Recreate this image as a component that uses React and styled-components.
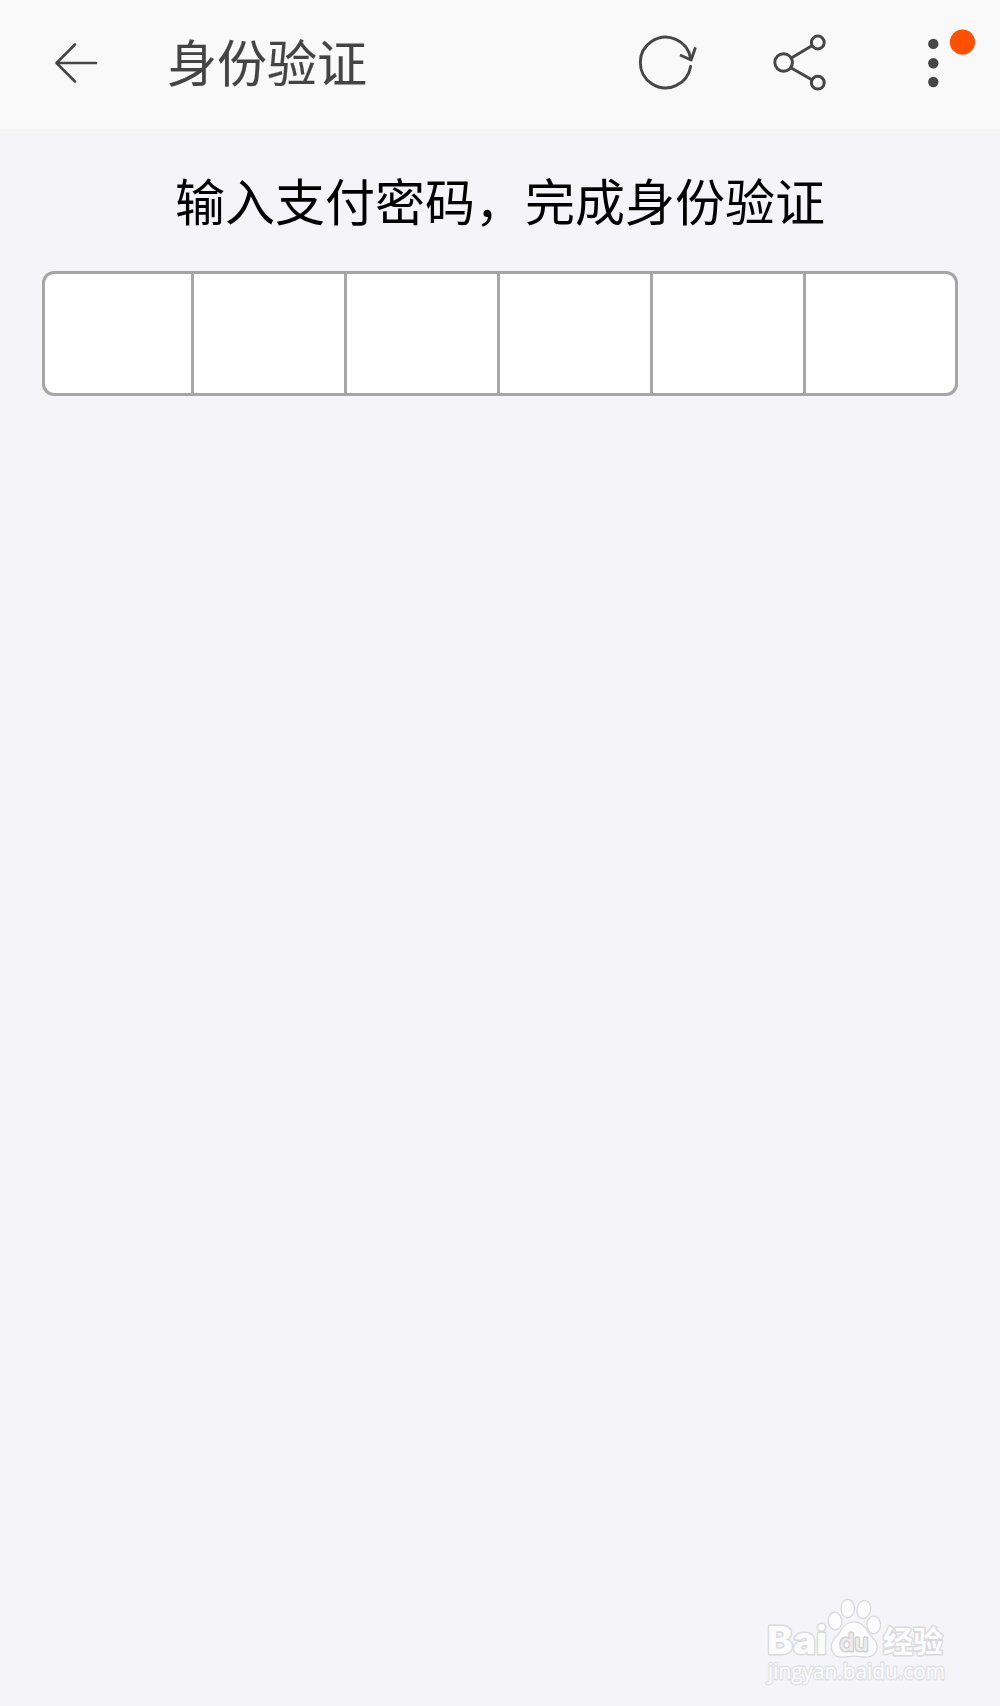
import React from "react";
import styled, { createGlobalStyle } from "styled-components";

const GlobalStyle = createGlobalStyle`
  * { box-sizing: border-box; }
  body { margin: 0; background: #f4f4f9; }
`;

const Page = styled.div`
  width: 1000px;
  height: 1706px;
  display: flex;
  flex-direction: column;
  background: #f4f4f9;
  font-family: "Noto Sans CJK SC", sans-serif;
`;

const TopBar = styled.header`
  height: 130px;
  flex: none;
  display: flex;
  align-items: flex-start;
  background: #f9f9f9;
  border-bottom: 1px solid #f6f6f9;
  padding: 23px 18px 0 46px;
`;

const IconButton = styled.button`
  width: ${(p) => p.$width}px;
  height: 80px;
  margin: 0 0 0 ${(p) => p.$gap || 0}px;
  padding: 0;
  border: 0;
  background: none;
  color: #464646;
  svg { display: block; }
`;

const Title = styled.h1`
  margin: 0 auto 0 61px;
  font-size: 50px;
  line-height: 75px;
  font-weight: 400;
  color: #444;
  -webkit-text-stroke: 0.15px #444;
`;

const Content = styled.main`
  flex: 1;
  display: flex;
  flex-direction: column;
  padding: 33px 42px 0;
`;

const Prompt = styled.p`
  margin: 0;
  text-align: center;
  font-size: 50px;
  line-height: 73px;
  color: #000;
`;

const CodeField = styled.div`
  margin-top: 35px;
  height: 125px;
  display: grid;
  grid-template-columns: 149.4px repeat(4, 152.8px) 1fr;
  border: 3px solid #a5a5a5;
  border-radius: 12px;
  background: #fff;
  overflow: hidden;
`;

const Cell = styled.div`
  border-right: 3px solid #a8a8a8;
  &:last-child { border-right: 0; }
`;

const Watermark = styled.footer`
  display: flex;
  flex-direction: column;
  align-items: flex-start;
  align-self: flex-end;
  width: 190px;
  margin: 0 48px 12px 0;
  svg { display: block; overflow: visible; }
`;

const Back = () => (
  <svg width="60" height="80" fill="none" stroke="currentColor" strokeWidth="2.6" strokeLinecap="round" strokeLinejoin="round">
    <path d="M29 21.5 10.5 40 29 58.5M11 40H50" />
  </svg>
);

const Refresh = () => (
  <svg width="80" height="80" viewBox="-0.6 0 80 80" fill="none" stroke="currentColor" strokeWidth="2.9" strokeLinecap="round" strokeLinejoin="round">
    <path d="M60 43.5A25.3 25.3 0 1 1 60 35.5M50.5 32.5 60.5 37 64.5 25.500" />
  </svg>
);

const Share = () => (
  <svg width="80" height="80" viewBox="-0.3 0 80 80" fill="none" stroke="currentColor" strokeWidth="3">
    <circle cx="33.3" cy="39.5" r="8.800" />
    <circle cx="67.5" cy="19.5" r="6.400" />
    <circle cx="67.5" cy="59.7" r="6.400" />
    <path d="M41 35 62 22.500M41 45 62 57" />
  </svg>
);

const More = () => (
  <svg width="80" height="80">
    <g fill="currentColor">
      <circle cx="31.3" cy="20.9" r="5.2" />
      <circle cx="31.3" cy="40.3" r="5.2" />
      <circle cx="31.3" cy="59" r="5.2" />
    </g>
    <circle cx="60.5" cy="19.2" r="12.6" fill="#ff5000" />
  </svg>
);

const BaiduMark = () => (
  <svg width="190" height="60" fill="#fcfcfd" stroke="#dadade" strokeWidth="2.8" paintOrder="stroke" strokeLinejoin="round">
    <text x="5" y="55.500" fontFamily="Inter" fontSize="38.500" fontWeight="800" textLength="60" lengthAdjust="spacingAndGlyphs">Bai</text>
    <g strokeWidth="2.6">
      <ellipse cx="73" cy="23" rx="6.2" ry="8.2" transform="rotate(-8 73 23)" />
      <ellipse cx="85.7" cy="10.5" rx="6.2" ry="8.6" />
      <ellipse cx="101.8" cy="11.5" rx="6.2" ry="8.4" transform="rotate(12 101.8 11.5)" />
      <ellipse cx="111.7" cy="27" rx="6.2" ry="8.2" />
      <path d="M92 24.5c6 0 10 3.500 13 9 3 5 9.500 9 9.500 15.500 0 6-4.500 9.500-10 9.500-5 0-8-1-12.500-1s-8 1-12.500 1c-6 0-9.500-4-9.500-10 0-6 5.500-9.500 9-15 3.500-6 7-9 13-9z" />
    </g>
    <text x="77.500" y="52.500" fontFamily="Inter" fontSize="24" fontWeight="500" textLength="29" lengthAdjust="spacingAndGlyphs" fill="#ececef" stroke="#d2d2d6" strokeWidth="3">du</text>
    <text x="121" y="54" fontFamily="Noto Sans CJK SC" fontSize="30" fontWeight="700">经验</text>
  </svg>
);

const SiteAddress = () => (
  <svg width="190" height="36" fill="#fcfcfd" stroke="#e2e2e6" strokeWidth="2.8" paintOrder="stroke" strokeLinejoin="round">
    <text x="6" y="21" fontFamily="Open Sans" fontSize="22" textLength="177" lengthAdjust="spacingAndGlyphs">jingyan.baidu.com</text>
  </svg>
);

export default function App() {
  return (
    <Page>
      <GlobalStyle />
      <TopBar>
        <IconButton $width={60} aria-label="返回"><Back /></IconButton>
        <Title>身份验证</Title>
        <IconButton $width={80} aria-label="刷新"><Refresh /></IconButton>
        <IconButton $width={80} $gap={40} aria-label="分享"><Share /></IconButton>
        <IconButton $width={80} $gap={72} aria-label="更多"><More /></IconButton>
      </TopBar>
      <Content>
        <Prompt>输入支付密码，完成身份验证</Prompt>
        <CodeField>
          {[0, 1, 2, 3, 4, 5].map((i) => <Cell key={i} />)}
        </CodeField>
      </Content>
      <Watermark>
        <BaiduMark />
        <SiteAddress />
      </Watermark>
    </Page>
  );
}
